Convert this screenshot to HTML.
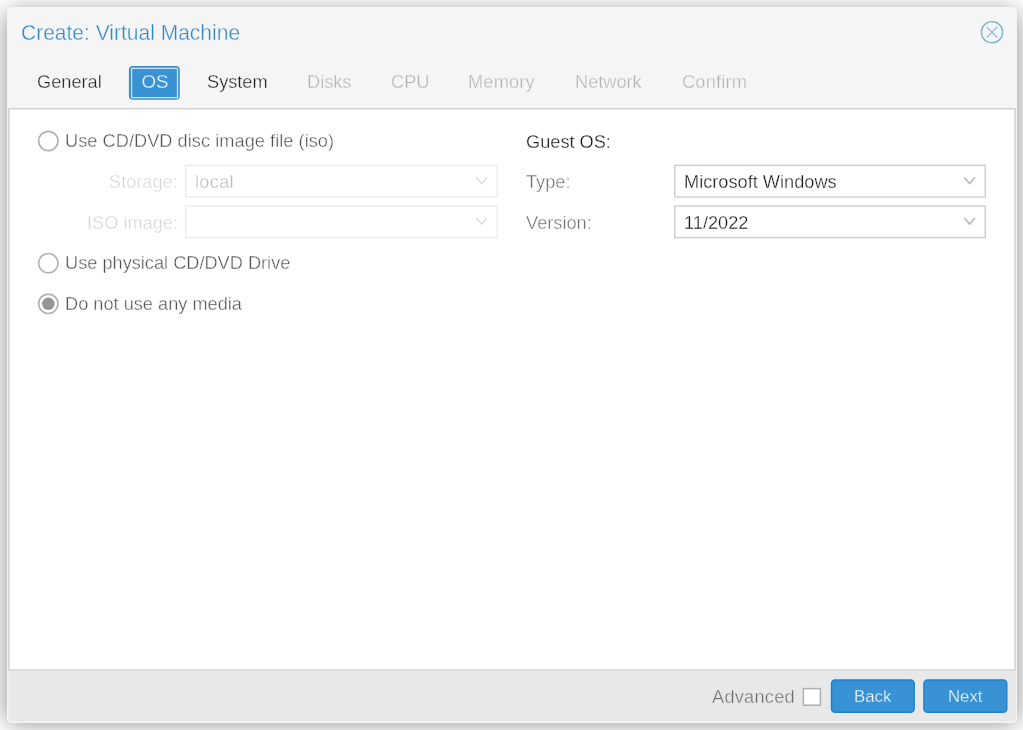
<!DOCTYPE html>
<html lang="en">
<head>
<meta charset="utf-8">
<title>Create: Virtual Machine</title>
<style>
  html, body { margin: 0; padding: 0; }
  body {
    width: 1023px; height: 730px; overflow: hidden; position: relative;
    background: #ffffff;
    font-family: "Liberation Sans", sans-serif;
    font-size: 18.2px; color: #3a3a3a;
  }
  #stage { position: absolute; left: 0; top: 0; width: 1023px; height: 730px; will-change: transform; }
  .abs { position: absolute; white-space: nowrap; line-height: 1; }
  #shadow {
    position: absolute; left: 7px; top: 12.2px; width: 1010.4px; height: 710.8px;
    border-radius: 5px; box-shadow: 0 0 24px rgba(0,0,0,0.46);
  }
  #win {
    position: absolute; left: 7px; top: 7px; width: 1010.4px; height: 716px;
    background: #f5f5f5; border-radius: 5px;
  }
  #shapes { position: absolute; left: 0; top: 0; }
  #title { left: 21px; top: 21.6px; font-size: 22.4px; color: #2f87c9; -webkit-text-stroke: 0.4px #f5f5f5; transform: scaleX(0.938); transform-origin: 0 0; }
  .tab { top: 73px; color: #1e1e1e; -webkit-text-stroke: 0.35px #f5f5f5; }
  .tab.dis { color: #b2b2b2; }
  #tab-os-t { color: #ffffff; -webkit-text-stroke: 0.35px #3892d4; }
  .lbl { color: #6f6f6f; -webkit-text-stroke: 0.38px #fff; }
  .lbl.dis { color: #d6d6d6; }
  .val { color: #141414; -webkit-text-stroke: 0.32px #fff; }
  .val.dis { color: #bcbcbc; }
  .txt { color: #525252; -webkit-text-stroke: 0.38px #fff; }
  .btnt { color: #ffffff; font-size: 16.8px; top: 689px; -webkit-text-stroke: 0.3px #3892d4; }
  #adv { color: #6e6e6e; -webkit-text-stroke: 0.35px #e8e8e8; letter-spacing: 0.25px; }
</style>
</head>
<body>
<div id="stage">
<div id="shadow"></div>
<div id="win"></div>
<svg id="shapes" width="1023" height="730" viewBox="0 0 1023 730">
<rect x="8.9" y="108.7" width="1006.2" height="561.4" fill="#ffffff" stroke="#cfcfcf" stroke-width="1.4"/>
<path d="M8.4 670.8 H1016 V718 Q1016 721.5 1012.5 721.5 H11.9 Q8.4 721.5 8.4 718 Z" fill="#e8e8e8"/>
<g fill="none"><circle cx="992" cy="32.2" r="10.6" stroke="#78aedb" stroke-width="1.3"/><path d="M986.7 26.9 L997.3 37.5 M997.3 26.9 L986.7 37.5" stroke="#86b7df" stroke-width="1.1"/></g>
<rect x="129.6" y="66.6" width="49.5" height="32.5" rx="3.4" fill="#3892d4" stroke="#3990d3" stroke-width="1.4"/>
<rect x="131.6" y="68.4" width="45.9" height="29.2" rx="0.6" fill="none" stroke="#cfe3f5" stroke-width="1.3"/>
<circle cx="48.3" cy="141" r="9.7" fill="#fff" stroke="#b2b2b2" stroke-width="1.7"/>
<rect x="185.7" y="165.4" width="311.6" height="31.6" fill="#fff" stroke="#ececec" stroke-width="1.4"/>
<path d="M476.3 177.4 L481.6 183.5 L486.9 177.4" fill="none" stroke="#dedede" stroke-width="1.5"/>
<rect x="185.7" y="206.0" width="311.6" height="31.6" fill="#fff" stroke="#ececec" stroke-width="1.4"/>
<path d="M476.3 218.0 L481.6 224.1 L486.9 218.0" fill="none" stroke="#dedede" stroke-width="1.5"/>
<circle cx="48.3" cy="263.2" r="9.7" fill="#fff" stroke="#b2b2b2" stroke-width="1.7"/>
<circle cx="48.3" cy="303.8" r="9.7" fill="#fff" stroke="#b2b2b2" stroke-width="1.7"/><circle cx="48.3" cy="303.8" r="6.25" fill="#959595"/>
<rect x="674.7" y="165.4" width="310.6" height="31.6" fill="#fff" stroke="#cdcdcd" stroke-width="1.4"/>
<path d="M964.3 177.4 L969.6 183.5 L974.9 177.4" fill="none" stroke="#b5b5b5" stroke-width="1.5"/>
<rect x="674.7" y="206.0" width="310.6" height="31.6" fill="#fff" stroke="#cdcdcd" stroke-width="1.4"/>
<path d="M964.3 218.0 L969.6 224.1 L974.9 218.0" fill="none" stroke="#b5b5b5" stroke-width="1.5"/>
<rect x="803.4" y="688.6" width="17" height="16.6" fill="#fff" stroke="#b0b0b0" stroke-width="1.5"/>
<rect x="831.5" y="680.0" width="82.7" height="32.3" rx="3.6" fill="#3892d4" stroke="#1f80ce" stroke-width="1.4"/>
<rect x="923.9" y="680.0" width="82.9" height="32.3" rx="3.6" fill="#3892d4" stroke="#1f80ce" stroke-width="1.4"/>
</svg>

<div id="title" class="abs">Create: Virtual Machine</div>

<!-- tabs -->
<div class="abs tab" style="left:37px;">General</div>
<div class="abs tab" id="tab-os-t" style="left:141.5px; font-size:18.7px;">OS</div>
<div class="abs tab" style="left:207px;">System</div>
<div class="abs tab dis" style="left:307px;">Disks</div>
<div class="abs tab dis" style="left:391px;">CPU</div>
<div class="abs tab dis" style="left:468px; letter-spacing:0.18px;">Memory</div>
<div class="abs tab dis" style="left:575px;">Network</div>
<div class="abs tab dis" style="left:682px; letter-spacing:0.2px;">Confirm</div>

<!-- left column -->
<div class="abs txt" style="left:65px; top:132px; letter-spacing:0.04px;">Use CD/DVD disc image file (iso)</div>
<div class="abs lbl dis" style="left:109px; top:173px;">Storage:</div>
<div class="abs val dis" style="left:195px; top:173px; letter-spacing:0.3px;">local</div>
<div class="abs lbl dis" style="left:87px; top:214px;">ISO image:</div>
<div class="abs txt" style="left:65px; top:254px;">Use physical CD/DVD Drive</div>
<div class="abs txt" style="left:65px; top:295px;">Do not use any media</div>

<!-- right column -->
<div class="abs val" style="left:526px; top:133px;">Guest OS:</div>
<div class="abs lbl" style="left:526px; top:173px;">Type:</div>
<div class="abs val" style="left:684px; top:173px;">Microsoft Windows</div>
<div class="abs lbl" style="left:526px; top:214px;">Version:</div>
<div class="abs val" style="left:684px; top:214px;">11/2022</div>

<!-- footer -->
<div class="abs lbl" id="adv" style="left:712px; top:688px;">Advanced</div>
<div class="abs btnt" style="left:854px;">Back</div>
<div class="abs btnt" style="left:948px;">Next</div>
</div>
</body>
</html>
